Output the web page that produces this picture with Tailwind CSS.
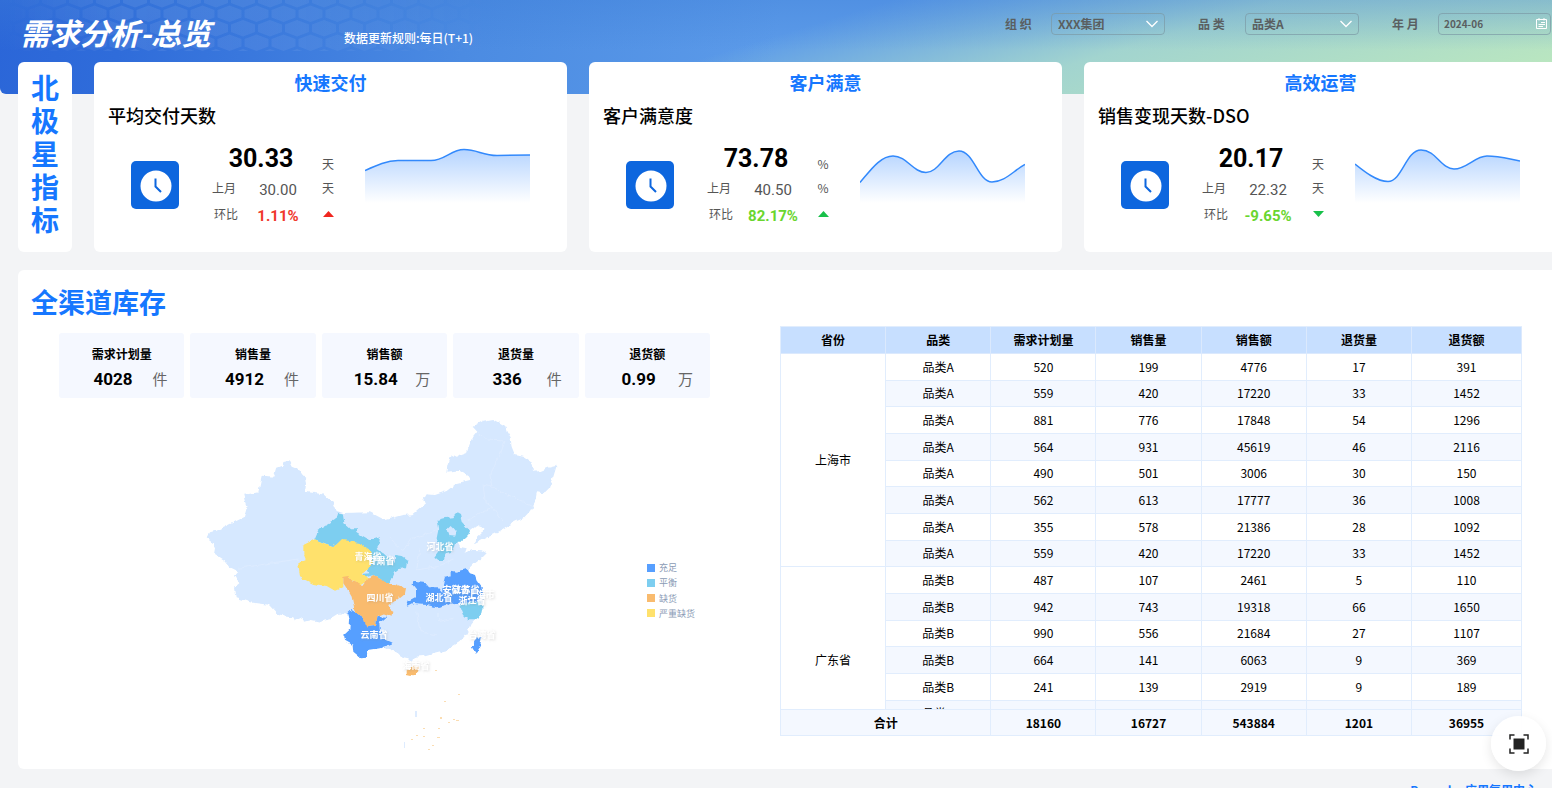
<!DOCTYPE html>
<html lang="zh-CN">
<head>
<meta charset="utf-8">
<title>需求分析-总览</title>
<script src="https://cdn.jsdelivr.net/npm/@tailwindcss/browser@4"></script>
</head>
<body class="h-screen overflow-hidden bg-[#f3f4f6] font-['Noto_Sans_CJK_SC',sans-serif] text-black">

<header class="relative h-[94px] overflow-hidden rounded-bl-md bg-[linear-gradient(180deg,rgba(60,125,215,.35)_0,rgba(60,125,215,0)_50px),linear-gradient(163deg,rgba(165,215,207,0)_48%,#a2d4cf_69%,#bbe7bf_96%),linear-gradient(98deg,#2b66d8_0,#2f6cda_8%,#4b8be2_30%,#5c9be9_50%)]">
  <svg class="absolute left-0 top-0 h-14 w-[500px]" viewBox="0 0 500 56" aria-hidden="true">
    <defs>
      <pattern id="hex" width="27" height="29" patternUnits="userSpaceOnUse" y="5">
        <path d="M13.500.5 25.500 5V12.500L13.500 17 1.500 12.500V5ZM0 15 12 19.500V27L0 31.500-12 27V19.500ZM27 15 39 19.500V27L27 31.500 15 27V19.500ZM0-14 12-9.500V-2L0 2.500-12-2ZM27-14 39-9.500V-2L27 2.500 15-2V-9.500Z" fill="#fff" fill-opacity=".08"/>
      </pattern>
      <linearGradient id="fade"><stop offset="0" stop-color="#fff" stop-opacity="0"/><stop offset=".25" stop-color="#fff"/><stop offset=".6" stop-color="#fff" stop-opacity=".8"/><stop offset="1" stop-color="#fff" stop-opacity="0"/></linearGradient>
      <mask id="fm"><rect width="500" height="56" fill="url(#fade)"/></mask>
    </defs>
    <rect width="500" height="51" fill="url(#hex)" mask="url(#fm)"/>
  </svg>
  <div class="relative flex h-[62px] pl-5 pr-px">
    <h1 class="w-[324px] shrink-0 pt-[11px] text-[30px] font-bold italic leading-[42px] text-white">需求分析-总览</h1>
    <p class="pt-[29px] text-xs font-medium leading-[18px] text-white">数据更新规则:每日(T+1)</p>
    <form class="ml-auto mt-[13px] flex h-[22px] gap-[33px] text-xs font-bold text-[#5a5f61]">
      <div class="flex items-center">
        <label for="org" class="w-[46px]">组 织</label>
        <span class="relative"><select id="org" class="block h-[22px] w-[114px] appearance-none rounded-sm border border-[#7c9aa5]/70 bg-transparent pl-[6px] leading-5"><option>XXX集团</option></select>
        <svg class="pointer-events-none absolute right-[7px] top-[7px] h-2 w-3" viewBox="0 0 12 8" fill="none" stroke="#fff" stroke-width="1.300"><path d="M.5 1 6 6.500 11.500 1"/></svg></span>
      </div>
      <div class="flex items-center">
        <label for="cat" class="w-[47px]">品 类</label>
        <span class="relative"><select id="cat" class="block h-[22px] w-[114px] appearance-none rounded-sm border border-[#7c9aa5]/70 bg-transparent pl-[6px] leading-5"><option>品类A</option></select>
        <svg class="pointer-events-none absolute right-[7px] top-[7px] h-2 w-3" viewBox="0 0 12 8" fill="none" stroke="#fff" stroke-width="1.300"><path d="M.5 1 6 6.500 11.500 1"/></svg></span>
      </div>
      <div class="flex items-center">
        <label for="month" class="w-[46px]">年 月</label>
        <span class="relative"><input id="month" value="2024-06" class="block h-[22px] w-[113px] rounded-sm border border-[#7c9aa5]/70 bg-transparent pl-[5px] pb-[2px] text-[10px] font-bold">
        <button type="button" aria-label="选择月份" class="absolute right-[4px] top-[5px]"><svg class="h-[11px] w-[11px]" viewBox="0 0 11 11" fill="none" stroke="#fff"><path d="M.5 1.500H10.500V10.500H.5ZM3 0V2.500M8 0V2.500M5 4.500H9M2.500 6.500H9M2.500 8.500H7"/></svg></button></span>
      </div>
    </form>
  </div>
</header>

<section class="relative -mr-[5px] -mt-8 flex gap-[22px] pl-[18px]">
  <h2 class="flex h-[190px] w-[54px] shrink-0 justify-center rounded-md bg-white pt-[9px] text-[28px] font-bold leading-[33px] text-[#1677ff]"><span class="w-7">北极星指标</span></h2>
  <div id="kpis" class="grid min-w-0 flex-1 grid-cols-3 gap-[22px]"></div>
</section>

<main class="mt-[18px] ml-[18px] flex h-[499px] rounded-l-md bg-white">
  <section class="w-[692px] shrink-0 pt-[11px]">
    <h2 class="pl-[13px] text-[27px] font-bold leading-[42px] text-[#1677ff]">全渠道库存</h2>
    <div id="stats" class="ml-[41px] mt-[10px] grid grid-cols-5 gap-[6px]"></div>
    <svg class="ml-[41px] mt-[7px] block h-[350px] w-[651px]" viewBox="59 405 651 350" role="img" aria-label="全渠道库存地图">
      <defs>
        <filter id="rough" x="190" y="405" width="400" height="350" filterUnits="userSpaceOnUse"><feTurbulence type="fractalNoise" baseFrequency=".16" numOctaves="2" seed="4"/><feDisplacementMap in="SourceGraphic" scale="5" xChannelSelector="R" yChannelSelector="G"/></filter>
        <filter id="ts" x="-20%" y="-20%" width="140%" height="160%"><feDropShadow dx="1" dy="1" stdDeviation=".8" flood-color="#888" flood-opacity=".3"/></filter>
      </defs>
      <g filter="url(#rough)">
        <g transform="translate(190 405) scale(.333333)">
          <path fill="#d6e8ff" d="M848 65 880 47 910 42 945 62 950 80 962 100 965 125 975 150 1000 155 1028 175 1032 200 1052 198 1075 188 1100 182 1090 215 1080 250 1065 265 1040 262 1035 290 1020 318 1000 340 975 350 950 365 930 378 910 388 885 400 850 418 862 400 878 385 880 370 862 363 840 380 830 390 815 400 800 410 808 425 830 430 824 446 850 435 875 436 890 445 875 460 855 475 840 490 835 505 860 530 875 552 885 590 878 595 870 625 855 643 842 657 830 685 810 710 770 735 730 745 700 753 675 755 665 770 655 760 640 757 615 740 570 720 465 625 445 627 420 643 390 650 365 645 345 650 340 635 315 647 310 637 290 635 270 632 240 600 180 592 140 580 135 545 148 535 135 512 145 500 120 488 100 465 72 447 75 430 65 412 50 400 60 382 85 375 110 362 165 335 172 310 165 290 160 270 205 262 215 215 250 218 258 190 278 182 280 168 295 165 305 185 330 195 345 215 348 240 345 260 400 268 430 295 440 318 460 324 540 322 585 345 640 330 670 328 705 298 700 285 710 268 735 270 770 258 800 235 840 225 840 215 810 195 772 200 775 180 785 148 800 155 830 145 838 120 850 95 862 80Z"/>
          <path fill="none" stroke="#dfecff" stroke-width="2.500" d="M862 80 890 105 945 108 930 150 900 210 905 245 940 262 985 285 1030 305M905 245 880 240 885 290 910 310 940 350M910 310 870 325 835 345M145 490 240 475 325 462M600 400 640 435 665 400 740 378M690 430 680 495 740 485 790 465M680 620 690 680 740 690M745 620 745 650 790 640"/>
        </g>
        <g transform="translate(280 500) scale(.333333)">
          <path fill="#7dcef0" d="M103 118 115 90 140 75 165 60 172 38 188 40 193 70 210 85 235 85 230 100 250 112 268 122 300 112 298 130 290 145 310 160 330 178 345 185 345 165 365 168 382 180 378 205 355 207 345 215 335 240 325 255 310 250 300 235 280 225 250 235 248 222 268 220 240 160 180 125 165 138 140 132Z"/>
          <path fill="#ffe16c" d="M70 135 105 118 140 133 165 138 183 120 205 122 240 130 270 150 278 185 262 210 245 222 265 240 240 255 210 235 190 235 190 262 165 272 140 258 100 252 60 232 55 190 78 180 70 160Z"/>
          <path fill="#f9bb6e" d="M190 230 205 228 215 240 250 255 265 235 280 225 300 235 318 252 345 252 378 265 375 280 350 300 325 315 330 330 340 335 338 350 310 340 290 348 285 378 260 382 248 350 225 338 215 290 200 265 190 250Z"/>
          <path fill="#579fff" d="M202 340 212 330 225 338 248 350 262 382 285 378 290 348 320 350 298 370 300 395 320 420 338 428 300 445 265 450 258 470 240 472 220 455 218 435 195 422 192 405 208 390 210 360ZM400 245 440 250 450 262 475 262 500 290 515 305 500 315 470 322 440 315 400 312 385 320 380 305 408 290 408 268 398 255ZM490 250 495 230 515 225 515 212 530 215 560 207 570 220 585 225 592 245 605 262 610 285 590 302 560 312 525 312 505 300 490 285ZM590 413 605 410 600 440 588 462 575 440Z"/>
          <path fill="#7dcef0" fill-rule="evenodd" d="M540 315 560 312 600 302 608 320 603 345 585 358 565 358 552 345ZM470 60 490 55 520 52 530 40 540 45 545 65 570 92 562 110 545 125 530 125 525 140 515 155 500 160 495 180 475 180 463 170 478 150 470 115 475 90ZM500 92 515 78 530 95 525 110 505 108Z"/>
          <path fill="#f9bb6e" d="M380 511 395 500 418 500 414 518 398 529 380 525Z"/>
        </g>
      </g>
      <g fill="#fbd5a0" opacity=".8">
        <path d="M435 670h2v1h-2zM458 694h2v1h-2zM444 701h2v1h-2zM440 717h2v2h-2zM453 719h2v1h-2zM456 720h3v1h-3zM448 722h2v1h-2zM438 728h2v1h-2zM423 728h2v1h-2zM437 737h3v1h-3zM423 736h2v1h-2zM411 739h2v1h-2zM416 735h2v1h-2zM428 749h2v1h-2zM432 745h2v1h-2z"/>
        <path fill="#d6e8ff" d="M415 711h2v6h-2zM404 742h1v6h-1z"/>
      </g>
      <g font-size="9" font-weight="700" fill="#fff" text-anchor="middle" filter="url(#ts)">
        <text x="440" y="550">河北省</text><text x="368" y="560">青海省</text><text x="381" y="564">甘肃省</text><text x="380" y="601">四川省</text><text x="374" y="638">云南省</text><text x="439" y="601">湖北省</text><text x="456" y="593">安徽省</text><text x="466" y="593">江苏省</text><text x="481" y="598">上海市</text><text x="472" y="604">浙江省</text><text x="482" y="638">台湾省</text><text x="416" y="669">海南省</text>
      </g>
      <g font-size="9" fill="#8a9bb5">
        <path fill="#579fff" d="M647 564h8v8h-8z"/><text x="659" y="571">充足</text>
        <path fill="#7dcef0" d="M647 579h8v8h-8z"/><text x="659" y="586">平衡</text>
        <path fill="#f9bb6e" d="M647 594h8v8h-8z"/><text x="659" y="602">缺货</text>
        <path fill="#ffe16c" d="M647 609h8v8h-8z"/><text x="659" y="617">严重缺货</text>
      </g>
    </svg>
  </section>

  <section class="ml-[70px] mr-[30px] mt-14 h-[410px] min-w-0 flex-1 overflow-hidden border-l border-t border-[#e1edfd]">
    <table class="h-[454px] w-full table-fixed border-separate border-spacing-0 text-center text-xs leading-[18px]">
      <thead class="sticky top-0">
        <tr class="h-[27px] [&>th]:border-b [&>th]:border-r [&>th]:border-[#dbe9fd] [&>th]:bg-[#c7dfff] [&>th]:p-0">
          <th>省份</th><th>品类</th><th>需求计划量</th><th>销售量</th><th>销售额</th><th>退货量</th><th class="w-[110px]">退货额</th>
        </tr>
      </thead>
      <tbody id="rows"></tbody>
      <tfoot class="sticky bottom-0">
        <tr class="h-[27px] font-bold [&>td]:border-b [&>td]:border-r [&>td]:border-t [&>td]:border-[#e1edfd] [&>td]:bg-[#f4f8ff] [&>td]:p-0">
          <td colspan="2">合计</td><td>18160</td><td>16727</td><td>543884</td><td>1201</td><td>36955</td>
        </tr>
      </tfoot>
    </table>
  </section>
</main>

<footer class="flex justify-end pr-[15px] pt-3 text-xs font-bold leading-[18px]"><a href="#" class="text-[#1677ff]">Powerby 应用复用中心</a></footer>

<button type="button" aria-label="全屏" class="fixed bottom-[17px] right-[6px] flex h-[55px] w-[55px] items-center justify-center rounded-full bg-white/95 shadow-[0_4px_12px_rgba(0,0,0,.1)]">
  <svg class="h-5 w-5" viewBox="0 0 20 20" fill="none" stroke="#222" stroke-width="1.500"><path d="M1 5.500V1H5.500M14.500 1H19V5.500M19 14.500V19H14.500M5.500 19H1V14.500"/><path fill="#222" stroke="none" d="M4.500 4.500h11v11h-11z"/></svg>
</button>

<script>
const kpis = [
  ['快速交付', '平均交付天数', '30.33', '30.00', '天', '1.11%', 'text-[#f0382b]', 'M1 10 6.500 4 12 10Z', '#f0261f', 'M0 26.500C12 21 22 16.500 33 16.500L66 16.500C80 16.500 86 5.500 99 5.500 112 5.500 118 11.500 132 11.500L165 11'],
  ['客户满意', '客户满意度', '73.78', '40.50', '%', '82.17%', 'text-[#6ad62f]', 'M1 10 6.500 4 12 10Z', '#18c04a', 'M0 38.500C10 27 20 12 33 12 47 12 53 28.500 66 28.500 79 28.500 85 7 99 7 114 7 118 38 132 38 145 38 153 27 165 20.500'],
  ['高效运营', '销售变现天数-DSO', '20.17', '22.32', '天', '-9.65%', 'text-[#6ad62f]', 'M1 4 6.500 10 12 4Z', '#18c04a', 'M0 20C10 28 22 37.500 33 37.500 47 37.500 51 6 66 6 81 6 86 25 99 25 112 25 120 12 132 12 144 12 154 15 165 17'],
];
document.getElementById('kpis').innerHTML = kpis.map(([title, name, now, last, unit, rate, tone, tri, triFill, line], i) => `
  <article class="h-[190px] rounded-md bg-white">
    <h3 class="pt-[7px] text-center text-lg font-bold leading-[27px] text-[#1677ff]">${title}</h3>
    <h4 class="mt-[5px] pl-[14px] text-lg font-medium leading-7">${name}</h4>
    <div class="mt-[15px] flex pl-[37px]">
      <svg class="mt-[17px] h-12 w-12 shrink-0" viewBox="0 0 48 48"><rect width="48" height="48" rx="5" fill="#0d66de"/><circle cx="25" cy="25" r="15.500" fill="#fff"/><path d="M24.500 17.500V25.500L30 31" fill="none" stroke="#0d66de" stroke-width="2"/></svg>
      <div class="ml-[33px] grid h-[77px] grid-cols-[40px_52px_48px] grid-rows-[30px_30px_17px] text-xs text-[#555]">
        <strong class="col-span-2 pl-[6px] text-center font-['Roboto',sans-serif] text-[25px] leading-[30px] text-black">${now}</strong>
        <span class="pt-[11px] text-center leading-[18px]">${unit}</span>
        <span class="leading-[28px]">上月</span>
        <span class="text-center font-['Roboto',sans-serif] text-[15px] leading-[32px]">${last}</span>
        <span class="text-center leading-[28px]">${unit}</span>
        <span class="pl-[2px] leading-[20px]">环比</span>
        <span class="overflow-hidden text-center font-['Roboto',sans-serif] text-[15px] font-bold leading-6 ${tone}">${rate}</span>
        <svg class="mx-auto mt-[3px] h-[14px] w-[13px]" viewBox="0 0 13 14"><path d="${tri}" fill="${triFill}"/></svg>
      </div>
      <svg class="ml-[13px] h-[60px] w-[165px] shrink-0" viewBox="0 0 165 60"><defs><linearGradient id="a${i}" x2="0" y2="1"><stop stop-color="#b5d4ff"/><stop offset="1" stop-color="#fff"/></linearGradient></defs><path d="${line}V59H0Z" fill="url(#a${i})"/><path d="${line}" fill="none" stroke="#3289fc" stroke-width="1.500"/></svg>
    </div>
  </article>`).join('');

const stats = [['需求计划量', '4028', '件'], ['销售量', '4912', '件'], ['销售额', '15.84', '万'], ['退货量', '336', '件'], ['退货额', '0.99', '万']];
document.getElementById('stats').innerHTML = stats.map(([n, v, u]) => `
  <div class="h-[65px] rounded-[3px] bg-[#f5f8ff] pt-3 text-center">
    <div class="text-xs font-bold leading-[18px]">${n}</div>
    <div class="grid grid-cols-[30px_48px_46px] items-center"><strong class="col-start-2 font-['Roboto',sans-serif] text-[17px] leading-8">${v}</strong><span class="text-[15px] leading-8 text-[#666]">${u}</span></div>
  </div>`).join('');

const data = [
  [520,199,4776,17,391],[559,420,17220,33,1452],[881,776,17848,54,1296],[564,931,45619,46,2116],[490,501,3006,30,150],[562,613,17777,36,1008],[355,578,21386,28,1092],[559,420,17220,33,1452],
  [487,107,2461,5,110],[942,743,19318,66,1650],[990,556,21684,27,1107],[664,141,6063,9,369],[241,139,2919,9,189],['','','','',''],['','','','','']
];
document.getElementById('rows').innerHTML = data.map((r, i) => `
  <tr class="${i % 2 ? 'bg-[#f4f8ff]' : 'bg-white'} [&>td]:border-b [&>td]:border-r [&>td]:border-[#e1edfd] [&>td]:p-0">
    ${i === 0 ? '<td rowspan="8" class="bg-white">上海市</td>' : i === 8 ? '<td rowspan="7" class="bg-white">广东省</td>' : ''}
    <td>品类${i < 8 ? 'A' : 'B'}</td>${r.map(v => `<td>${v}</td>`).join('')}
  </tr>`).join('');
</script>
</body>
</html>
